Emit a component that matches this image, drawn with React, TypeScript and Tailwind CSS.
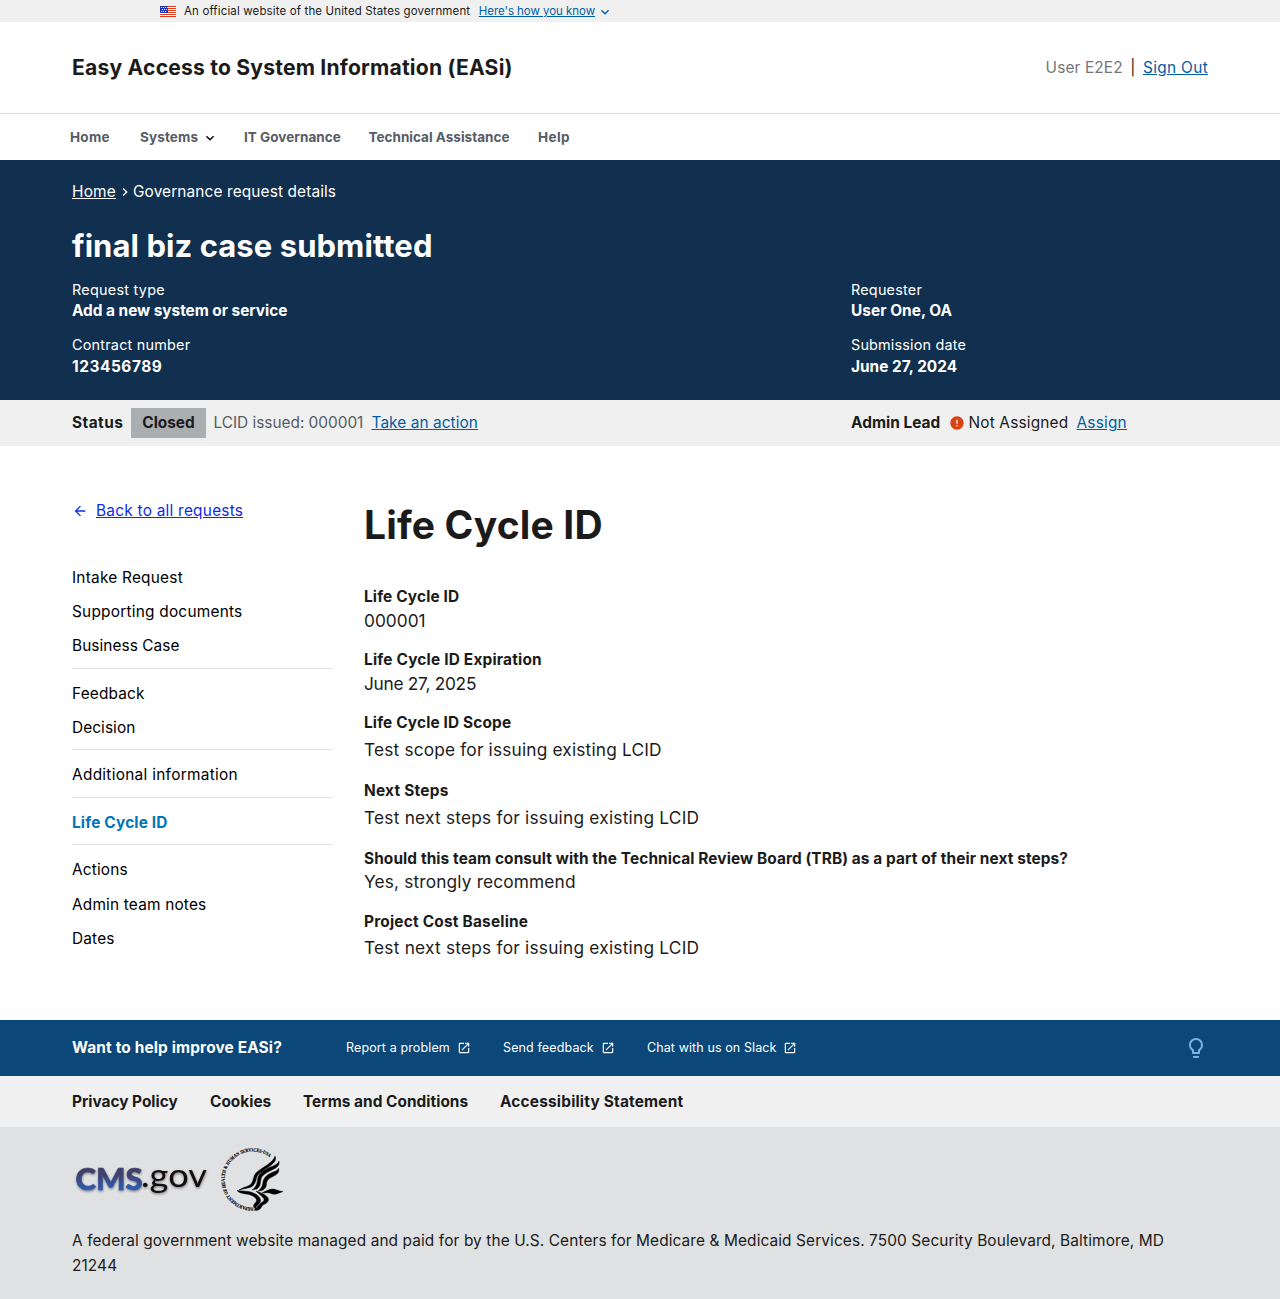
import type { ReactNode } from "react";
import { MdArrowBack, MdError, MdLaunch, MdLightbulbOutline, MdNavigateNext, MdExpandMore } from "react-icons/md";

function Flag() {
  return (
    <svg width="16" height="11" viewBox="0 0 16 11" shapeRendering="crispEdges" className="block shrink-0">
      <rect width="16" height="11" fill="#fff" />
      {[0, 2, 4, 6, 8, 10].map((y) => (
        <rect key={y} y={y} width="16" height="1" fill="#db3e1f" />
      ))}
      <rect width="8" height="7" fill="#1e33b1" />
      {[[1, 1], [3, 1], [5, 1], [7, 1], [2, 3], [4, 3], [6, 3], [1, 5], [3, 5], [5, 5]].map(([x, y]) => (
        <rect key={`${x}-${y}`} x={x} y={y} width="1" height="1" fill="#fff" />
      ))}
    </svg>
  );
}

function CmsLogo() {
  return (
    <svg width="140" height="64" viewBox="0 0 140 64" className="block">
      <defs>
        <linearGradient id="cms" x1="0" y1="0" x2="0" y2="1">
          <stop offset="0.4" stopColor="#40406c" />
          <stop offset="0.85" stopColor="#2c5fb8" />
        </linearGradient>
        <filter id="soft" x="-10%" y="-20%" width="120%" height="150%">
          <feDropShadow dx="0.3" dy="1.2" stdDeviation="1.2" floodColor="#333" floodOpacity="0.6" />
        </filter>
      </defs>
      <g filter="url(#soft)">
        <text x="3.5" y="42.6" fontFamily="Lato" fontWeight="900" fontSize="31" textLength="67" lengthAdjust="spacingAndGlyphs" fill="url(#cms)" stroke="url(#cms)" strokeWidth="0.6">
          CMS
        </text>
        <text x="69" y="40.4" fontFamily="Lato" fontWeight="400" fontSize="32" textLength="66" lengthAdjust="spacingAndGlyphs" fill="#170d10">
          .gov
        </text>
      </g>
    </svg>
  );
}

function HhsSeal() {
  return (
    <svg width="66" height="66" viewBox="0 0 66 66" className="block">
      <defs>
        <path id="ring" d="M35.5 60.5 A 28 28 0 1 1 56 14.5" />
      </defs>
      <text fontFamily="Liberation Serif" fontWeight="700" fontSize="4.9" fill="#000" stroke="#000" strokeWidth="0.15">
        <textPath href="#ring" textLength="107" lengthAdjust="spacingAndGlyphs">
          DEPARTMENT OF HEALTH &amp; HUMAN SERVICES·USA
        </textPath>
      </text>
      <g fill="#000" stroke="#000" strokeWidth="0.4" strokeLinejoin="round">
        <path d="M57 9 C59 13 56 16 52 19 C46 23 40 26 38.5 31 C37.500 36 36 39 32 40.500 L21 43 C25 40 30 40 33 37 C36 33 35 28 39 25 C46 19 55 16 57 9Z" />
        <path d="M61 14 C62 19 58 21 54 23 C48 26 44 28 43 32 C42 36 43 39 39 42 L34 43 C38 40 39 37 39.500 33 C40 28 43 25 48 22 C54 19 60 18 61 14Z" />
        <path d="M60.500 21 C62 26 58 28 54 30 C50 32 48.500 34 48.500 37 C48.500 40 47 42 44 43.500 L40 44 C44 41 44.500 38 45 35 C46 30 49 28 53 26 C57 24 60 24 60.500 21Z" />
        <path d="M44 46 C48 44 50 42.500 54 42 C58 42 60 44 65 44.500 C61 46 57 48.500 53 46.500 C50 45 48 46 44 46Z" />
        <path d="M19 43.500 L31 44.500 C37 46 42 49 42.500 53 C43 57 38 58 37.500 62 C34 59 36 57 38 55 C40 52 36 49 31 47.500 C27 46.500 22 47 19 43.500Z" />
        <path d="M38 44 C44 46 51 49 50.500 53 C50 57 44 57 43.500 60 C42 63 39 64 36 63 C39 61 40 58 43 56 C46 54 47 53 45 50.500 C43 48 40 46.500 38 44Z" />
      </g>
    </svg>
  );
}

function Field({ label, value, className, labelClass = "tracking-[0.0095em]", valueClass = "tracking-[0.012em]" }: { label: string; value: string; className: string; labelClass?: string; valueClass?: string }) {
  return (
    <div className={className}>
      <dt className={`text-[15.4px] leading-6 font-bold ${labelClass}`}>{label}</dt>
      <dd className={`text-[17.3px] leading-6 ${valueClass}`}>{value}</dd>
    </div>
  );
}

function HeroField({ label, value, labelClass, valueClass }: { label: string; value: string; labelClass: string; valueClass: string }) {
  return (
    <div>
      <dt className={`text-[14.4px] leading-[20.4px] ${labelClass}`}>{label}</dt>
      <dd className={`text-[15.4px] leading-[21px] font-bold ${valueClass}`}>{value}</dd>
    </div>
  );
}

function SideGroup({ children, className = "" }: { children: ReactNode; className?: string }) {
  return <ul className={`flex flex-col ${className}`}>{children}</ul>;
}

function SideLink({ children, className = "tracking-[0.011em]" }: { children: ReactNode; className?: string }) {
  return (
    <li className={`leading-6 ${className}`}>
      <a href="#">{children}</a>
    </li>
  );
}

function HelpLink({ children, className }: { children: ReactNode; className: string }) {
  return (
    <a href="#" className={`flex items-center gap-[7px] ${className}`}>
      {children}
      <MdLaunch size={14} className="-mt-px" />
    </a>
  );
}

export default function App() {
  return (
    <div className="h-[1299px] w-[1280px] overflow-hidden bg-white font-[Inter,sans-serif] text-[15.4px] leading-6 text-[#1b1b1b]">
      <div className="flex h-[22px] items-center bg-[#f0f0f0] pl-[160px] text-[11.5px]">
        <Flag />
        <span className="ml-2 tracking-[0.012em]">An official website of the United States government</span>
        <a href="#" className="ml-[8.5px] tracking-[-0.004em] text-[#005ea2] underline">Here's how you know</a>
        <MdExpandMore size={16} className="mt-0.5 ml-0.5 text-[#005ea2]" />
      </div>

      <header className="flex h-[92px] items-center justify-between border-b border-[#dcdee0] px-[72px]">
        <span className="text-[21.1px] font-bold tracking-[0.0095em]">Easy Access to System Information (EASi)</span>
        <div className="flex items-center gap-[7.5px]">
          <span className="tracking-[0.009em] text-[#71767a]">User E2E2</span>
          <span>|</span>
          <a href="#" className="tracking-[0.022em] text-[#005ea2] underline">Sign Out</a>
        </div>
      </header>

      <nav className="flex h-[46px] items-center pl-[70px] text-[13.5px] font-bold text-[#565c65]">
        <a href="#" className="w-[70px] tracking-[0.02em]">Home</a>
        <a href="#" className="flex w-[104px] items-center gap-1 tracking-[0.009em]">
          Systems <MdExpandMore size={16} className="mt-0.5 text-black" />
        </a>
        <a href="#" className="w-[124.5px] tracking-[0.003em]">IT Governance</a>
        <a href="#" className="w-[169.5px] tracking-[0.001em]">Technical Assistance</a>
        <a href="#" className="tracking-[0.03em]">Help</a>
      </nav>

      <section className="h-[240px] bg-[#112f4e] px-[72px] pt-[20px] text-white">
        <div className="flex h-6 items-center">
          <a href="#" className="tracking-[0.014em] underline">Home</a>
          <MdNavigateNext size={16} className="mx-px -mr-px" />
          <span className="ml-px tracking-[0.008em]">Governance request details</span>
        </div>
        <h1 className="mt-[22px] text-[31px] leading-10 font-bold tracking-[0.002em]">final biz case submitted</h1>
        <div className="mt-[14px] flex">
          <dl className="flex w-[779px] flex-col gap-[14px]">
            <HeroField label="Request type" value="Add a new system or service" labelClass="tracking-[0.018em]" valueClass="tracking-[-0.002em]" />
            <HeroField label="Contract number" value="123456789" labelClass="tracking-[0.015em]" valueClass="tracking-[0.037em]" />
          </dl>
          <dl className="flex flex-col gap-[14px]">
            <HeroField label="Requester" value="User One, OA" labelClass="tracking-[0.015em]" valueClass="tracking-[0.003em]" />
            <HeroField label="Submission date" value="June 27, 2024" labelClass="tracking-[0.012em]" valueClass="tracking-[0.001em]" />
          </dl>
        </div>
      </section>

      <section className="flex h-[46px] items-center bg-[#f0f0f0] px-[72px]">
        <div className="flex w-[779px] items-center">
          <span className="w-[59px] font-bold tracking-[0.03em]">Status</span>
          <span className="flex h-[30px] w-[75px] items-center justify-center bg-[#a9aeb1] font-bold">Closed</span>
          <span className="ml-[7.5px] w-[158px] tracking-[-0.001em] text-[#565c65]">LCID issued: 000001</span>
          <a href="#" className="tracking-[0.005em] text-[#005ea2] underline">Take an action</a>
        </div>
        <span className="w-[98px] font-bold tracking-[0.002em]">Admin Lead</span>
        <MdError size={16} className="text-[#d84315]" />
        <span className="ml-[3.5px] w-[108px] tracking-[0.011em]">Not Assigned</span>
        <a href="#" className="tracking-[0.013em] text-[#005ea2] underline">Assign</a>
      </section>

      <main className="flex h-[574px] px-[72px] pt-[52px]">
        <aside className="w-[260px] pt-[0.6px] text-black">
          <a href="#" className="flex items-center gap-2 text-[#0b2cec]">
            <MdArrowBack size={16} />
            <span className="tracking-[0.016em] underline">Back to all requests</span>
          </a>
          <nav className="mt-[43px] flex flex-col divide-y divide-[#dfe1e2]">
            <SideGroup className="gap-[10.2px] pb-[10px]">
              <SideLink className="tracking-[0.015em]">Intake Request</SideLink>
              <SideLink className="tracking-[0.015em]">Supporting documents</SideLink>
              <SideLink className="tracking-[0.004em]">Business Case</SideLink>
            </SideGroup>
            <SideGroup className="gap-[10.2px] pt-[13px] pb-[9px]">
              <SideLink>Feedback</SideLink>
              <SideLink className="tracking-[0.005em]">Decision</SideLink>
            </SideGroup>
            <SideGroup className="pt-[13px] pb-[10px]">
              <SideLink className="tracking-[0.019em]">Additional information</SideLink>
            </SideGroup>
            <SideGroup className="pt-[13px] pb-[9px]">
              <SideLink className="font-bold tracking-[0.011em] text-[#0076b8]">Life Cycle ID</SideLink>
            </SideGroup>
            <SideGroup className="gap-[10.4px] pt-[13px]">
              <SideLink>Actions</SideLink>
              <SideLink className="tracking-[0.012em]">Admin team notes</SideLink>
              <SideLink>Dates</SideLink>
            </SideGroup>
          </nav>
        </aside>
        <article className="ml-8">
          <h2 className="pt-[3px] text-[39px] leading-[48px] font-bold tracking-[0.004em]">Life Cycle ID</h2>
          <dl className="mt-[36px]">
            <Field className="h-[63px]" label="Life Cycle ID" value="000001" valueClass="tracking-[0.001em]" />
            <Field className="h-[63px]" label="Life Cycle ID Expiration" value="June 27, 2025" labelClass="tracking-[0.013em]" valueClass="tracking-[-0.016em]" />
            <Field className="h-[68px]" label="Life Cycle ID Scope" value="Test scope for issuing existing LCID" valueClass="pt-[3px] tracking-[0.01em]" />
            <Field className="h-[68px]" label="Next Steps" value="Test next steps for issuing existing LCID" labelClass="tracking-[0.016em]" valueClass="pt-[3px] tracking-[0.013em]" />
            <Field className="h-[63px]" label="Should this team consult with the Technical Review Board (TRB) as a part of their next steps?" value="Yes, strongly recommend" labelClass="tracking-[0.0063em]" valueClass="-mt-px tracking-[0.009em]" />
            <Field className="h-[63px]" label="Project Cost Baseline" value="Test next steps for issuing existing LCID" labelClass="tracking-[0.014em]" valueClass="pt-[2px] tracking-[0.013em]" />
          </dl>
        </article>
      </main>

      <section className="flex h-14 items-center bg-[#0b4778] px-[72px] text-[12.5px] text-white">
        <span className="w-[274px] text-[15.4px] font-bold tracking-[0.01em]">Want to help improve EASi?</span>
        <HelpLink className="w-[157px] tracking-[0.01em]">Report a problem</HelpLink>
        <HelpLink className="w-[144px] tracking-[0.01em]">Send feedback</HelpLink>
        <HelpLink className="tracking-[0.008em]">Chat with us on Slack</HelpLink>
        <MdLightbulbOutline size={24} className="ml-auto text-[#73b3e7]" />
      </section>

      <nav className="flex h-[51px] items-center bg-[#f0f0f0] px-[72px] font-bold">
        <a href="#" className="w-[138px] tracking-[-0.001em]">Privacy Policy</a>
        <a href="#" className="w-[93px] tracking-[0.001em]">Cookies</a>
        <a href="#" className="w-[197px] tracking-[0.002em]">Terms and Conditions</a>
        <a href="#" className="tracking-[0.013em]">Accessibility Statement</a>
      </nav>

      <footer className="h-[172px] bg-[#dfe1e2] px-[72px] pt-[20px]">
        <div className="flex h-[64px] gap-[6px]">
          <CmsLogo />
          <HhsSeal />
        </div>
        <p className="mt-[17px] leading-[25px] tracking-[0.0072em]">
          A federal government website managed and paid for by the U.S. Centers for Medicare &amp; Medicaid Services. 7500 Security Boulevard, Baltimore, MD 21244
        </p>
      </footer>
    </div>
  );
}
